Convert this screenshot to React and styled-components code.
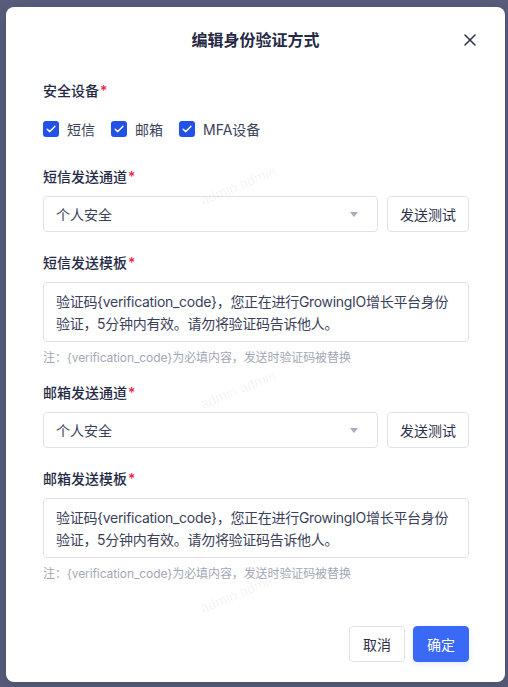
import React from "react";
import styled, { createGlobalStyle } from "styled-components";

const Global = createGlobalStyle`
  html, body { margin: 0; padding: 0; }
  body {
    background: #575d7b;
    font-family: "Inter", "Noto Sans CJK SC", sans-serif;
    -webkit-font-smoothing: antialiased;
  }
  * { box-sizing: border-box; }
`;

const Page = styled.div`
  width: 508px;
  height: 687px;
  padding: 7px 3px 5px 6px;
  overflow: hidden;
`;

const Modal = styled.div`
  position: relative;
  width: 499px;
  height: 675px;
  background: #fff;
  border-radius: 8px;
  display: flex;
  flex-direction: column;
  overflow: hidden;
  box-shadow: 0 4px 16px rgba(20, 24, 50, 0.18);
`;

const Header = styled.div`
  position: relative;
  padding: 21px 36px 0;
  height: 45px;
  display: flex;
  justify-content: center;
`;

const Title = styled.div`
  font-size: 16px;
  line-height: 24px;
  font-weight: 600;
  color: #252945;
`;

const Close = styled.button`
  position: absolute;
  right: 29px;
  top: 27px;
  width: 12px;
  height: 12px;
  padding: 0;
  border: none;
  background: transparent;
  display: flex;
  align-items: center;
  justify-content: center;
  cursor: pointer;
`;

const Body = styled.div`
  padding: 28px 36px 0 37px;
  flex: 1;
  display: flex;
  flex-direction: column;
`;

const Item = styled.div`
  margin-bottom: ${(p) => p.$mb}px;
`;

const Label = styled.div`
  font-size: 14px;
  line-height: 22px;
  font-weight: 500;
  color: #252945;
  margin-bottom: 8px;
`;

const Star = styled.span`
  color: #f0214d;
  margin-left: 1px;
`;

const CheckGroup = styled.div`
  display: flex;
  gap: 16px;
  padding-top: 8px;
  height: 30px;
  align-items: flex-end;
`;

const CheckItem = styled.label`
  display: flex;
  align-items: center;
  gap: 8px;
  height: 22px;
  font-size: 14px;
  color: #3b3f5a;
`;

const Box = styled.span`
  width: 16px;
  height: 16px;
  border-radius: 3px;
  background: #2251e8;
  display: flex;
  align-items: center;
  justify-content: center;
`;

const Row = styled.div`
  display: flex;
  gap: 9px;
`;

const Select = styled.div`
  flex: 1;
  height: 36px;
  border: 1px solid #dfe2ea;
  border-radius: 4px;
  padding: 0 12px 0 12px;
  display: flex;
  align-items: center;
  justify-content: space-between;
  font-size: 14px;
  color: #3b3f5a;
`;

const Arrow = styled.span`
  width: 0;
  height: 0;
  border-left: 4px solid transparent;
  border-right: 4px solid transparent;
  border-top: 5px solid #a6aabb;
  margin-right: 7px;
`;

const Button = styled.button`
  height: 36px;
  padding: 0 12px;
  min-width: ${(p) => p.$w || 0}px;
  border-radius: 4px;
  font-family: inherit;
  font-size: 14px;
  border: 1px solid ${(p) => (p.$primary ? "#3a6af5" : "#dfe2ea")};
  background: ${(p) => (p.$primary ? "#3a6af5" : "#fff")};
  color: ${(p) => (p.$primary ? "#fff" : "#2c304b")};
  box-shadow: ${(p) => (p.$primary ? "0 2px 6px rgba(58,106,245,0.15)" : "none")};
  cursor: pointer;
`;

const TextArea = styled.div`
  height: 60px;
  border: 1px solid #dfe2ea;
  border-radius: 4px;
  padding: 8px 10px 6px 12px;
  font-size: 14px;
  line-height: 22px;
  letter-spacing: -0.3px;
  color: #3b3f5a;
`;

const Note = styled.div`
  margin-top: 6px;
  font-size: 12px;
  line-height: 20px;
  letter-spacing: -0.1px;
  color: #a3a7b6;
`;

const Footer = styled.div`
  margin-top: auto;
  padding: 0 36px 20px;
  display: flex;
  justify-content: flex-end;
  gap: 8px;
`;

const Watermark = styled.div`
  position: absolute;
  left: ${(p) => p.$x}px;
  top: ${(p) => p.$y}px;
  font-size: 14px;
  color: rgba(60, 70, 110, 0.07);
  transform: rotate(-22deg);
  transform-origin: left top;
  pointer-events: none;
  white-space: nowrap;
  font-family: "Liberation Sans", sans-serif;
`;

const Check = () => (
  <svg width="12" height="12" viewBox="0 0 12 12" fill="none">
    <path d="M2.2 6.2 L4.8 8.6 L9.8 3.4" stroke="#fff" strokeWidth="1.5" strokeLinecap="round" strokeLinejoin="round" />
  </svg>
);

const Field = ({ label, children, mb }) => (
  <Item $mb={mb}>
    <Label>
      {label}
      <Star>*</Star>
    </Label>
    {children}
  </Item>
);

const template =
  "验证码{verification_code}，您正在进行GrowingIO增长平台身份验证，5分钟内有效。请勿将验证码告诉他人。";
const note = "注：{verification_code}为必填内容，发送时验证码被替换";

export default function App() {
  return (
    <>
      <Global />
      <Page>
        <Modal>
          <Header>
            <Title>编辑身份验证方式</Title>
            <Close aria-label="close">
              <svg width="12" height="12" viewBox="0 0 12 12">
                <path d="M1 1 L11 11 M11 1 L1 11" stroke="#2c304b" strokeWidth="1.5" strokeLinecap="round" />
              </svg>
            </Close>
          </Header>
          <Body>
            <Field label="安全设备" mb={26}>
              <CheckGroup>
                {["短信", "邮箱", "MFA设备"].map((t) => (
                  <CheckItem key={t}>
                    <Box>
                      <Check />
                    </Box>
                    {t}
                  </CheckItem>
                ))}
              </CheckGroup>
            </Field>
            <Field label="短信发送通道" mb={20}>
              <Row>
                <Select>
                  个人安全
                  <Arrow />
                </Select>
                <Button>发送测试</Button>
              </Row>
            </Field>
            <Field label="短信发送模板" mb={14}>
              <TextArea>{template}</TextArea>
              <Note>{note}</Note>
            </Field>
            <Field label="邮箱发送通道" mb={20}>
              <Row>
                <Select>
                  个人安全
                  <Arrow />
                </Select>
                <Button>发送测试</Button>
              </Row>
            </Field>
            <Field label="邮箱发送模板" mb={0}>
              <TextArea>{template}</TextArea>
              <Note>{note}</Note>
            </Field>
          </Body>
          <Footer>
            <Button $w={56}>取消</Button>
            <Button $primary $w={56}>确定</Button>
          </Footer>
          <Watermark $x={192} $y={186}>admin admin</Watermark>
          <Watermark $x={192} $y={390}>admin admin</Watermark>
          <Watermark $x={192} $y={594}>admin admin</Watermark>
        </Modal>
      </Page>
    </>
  );
}
